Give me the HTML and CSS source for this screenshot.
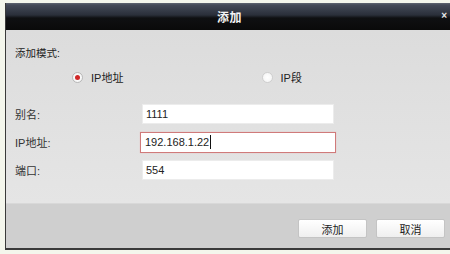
FILE: index.html
```html
<!DOCTYPE html>
<html lang="zh">
<head>
<meta charset="utf-8">
<title>添加</title>
<link rel="stylesheet" href="styles.css">
</head>
<body>
<div class="dialog">
  <div class="titlebar">
    <span class="title">添加</span>
    <span class="close">×</span>
  </div>
  <div class="content">
    <div class="mode-label">添加模式:</div>
    <div class="radio-row">
      <label class="radio-item"><span class="radio checked"></span><span>IP地址</span></label>
      <label class="radio-item second"><span class="radio"></span><span>IP段</span></label>
    </div>
    <div class="fields">
      <div class="field">
        <span class="label">别名:</span>
        <div class="input">1111</div>
      </div>
      <div class="field">
        <span class="label">IP地址:</span>
        <div class="input active">192.168.1.22<span class="caret"></span></div>
      </div>
      <div class="field">
        <span class="label">端口:</span>
        <div class="input">554</div>
      </div>
    </div>
  </div>
  <div class="footer">
    <button class="btn">添加</button>
    <button class="btn">取消</button>
  </div>
</div>
</body>
</html>
```

FILE: styles.css
```css
html, body {
  margin: 0;
  padding: 0;
  background: #f4f6ec;
  width: 450px;
  height: 254px;
  overflow: hidden;
}
body {
  font-family: "Liberation Sans", "Noto Sans CJK SC", sans-serif;
  font-size: 11px;
  color: #222;
}
.dialog {
  margin: 3px 0 0 5px;
  width: 445px;
  height: 245px;
  border-left: 1px solid #3a3a3a;
  border-bottom: 2px solid #3a3a3a;
  display: flex;
  flex-direction: column;
  background: #e2e2e2;
}
.titlebar {
  height: 27px;
  flex: none;
  display: flex;
  align-items: center;
  justify-content: center;
  position: relative;
  background: linear-gradient(to bottom, #606672 0px, #444a58 2px, #2a2f3a 12px, #0f1012 15px, #0a0a0a 27px);
}
.title {
  color: #f4f4f4;
  font-weight: bold;
  font-size: 12px;
  letter-spacing: 0.5px;
  margin-left: 2px;
}
.close {
  position: absolute;
  right: 4px;
  top: 7px;
  color: #e8e8e8;
  font-size: 10px;
  font-weight: bold;
}
.content {
  flex: 1;
  padding: 16px 0 0 9px;
  background: linear-gradient(to bottom, #dcdcdc, #e5e5e5);
  display: flex;
  flex-direction: column;
}
.mode-label {
  line-height: 14px;
  height: 14px;
  font-size: 10.5px;
}
.radio-row {
  margin-top: 10px;
  display: flex;
  height: 14px;
  align-items: center;
  padding-left: 57px;
}
.radio-item {
  display: flex;
  align-items: center;
  gap: 8px;
  width: 204px;
}
.radio {
  width: 9px;
  height: 9px;
  border-radius: 50%;
  border: 1px solid #cfcfcf;
  background: radial-gradient(circle, #fff 0, #f2f2f2 100%);
  display: flex;
  align-items: center;
  justify-content: center;
}
.radio.checked {
  border-color: #b8b8b8;
}
.radio.checked::after {
  content: "";
  width: 5px;
  height: 5px;
  border-radius: 50%;
  background: #d02828;
}
.fields {
  margin-top: 20px;
  display: flex;
  flex-direction: column;
  gap: 8px;
}
.field {
  display: flex;
  align-items: center;
  height: 20px;
}
.label {
  width: 127px;
  color: #333;
}
.input {
  width: 192px;
  height: 20px;
  box-sizing: border-box;
  background: #fff;
  border: 1px solid #ececec;
  padding-left: 3px;
  display: flex;
  align-items: center;
  color: #222;
}
.input.active {
  margin-left: -2px;
  width: 196px;
  height: 21px;
  border: 1px solid #d07a7a;
  box-shadow: 0 0 1px #e8b0b0;
  padding-left: 4px;
}
.caret {
  display: inline-block;
  width: 0;
  height: 14px;
  border-left: 1px solid #111;
  margin-left: 1px;
}
.footer {
  height: 45px;
  flex: none;
  background: #cfcfcf;
  border-top: 1px solid #d8d8d8;
  display: flex;
  justify-content: flex-end;
  align-items: flex-start;
  padding: 15px 6px 0 0;
  box-sizing: border-box;
  gap: 9px;
}
.btn {
  width: 69px;
  height: 19px;
  border: 1px solid #c4c4c4;
  border-radius: 2px;
  background: linear-gradient(to bottom, #ffffff, #efefef);
  font-family: "Liberation Sans", "Noto Sans CJK SC", sans-serif;
  font-size: 11px;
  color: #222;
  padding: 0;
}
```
